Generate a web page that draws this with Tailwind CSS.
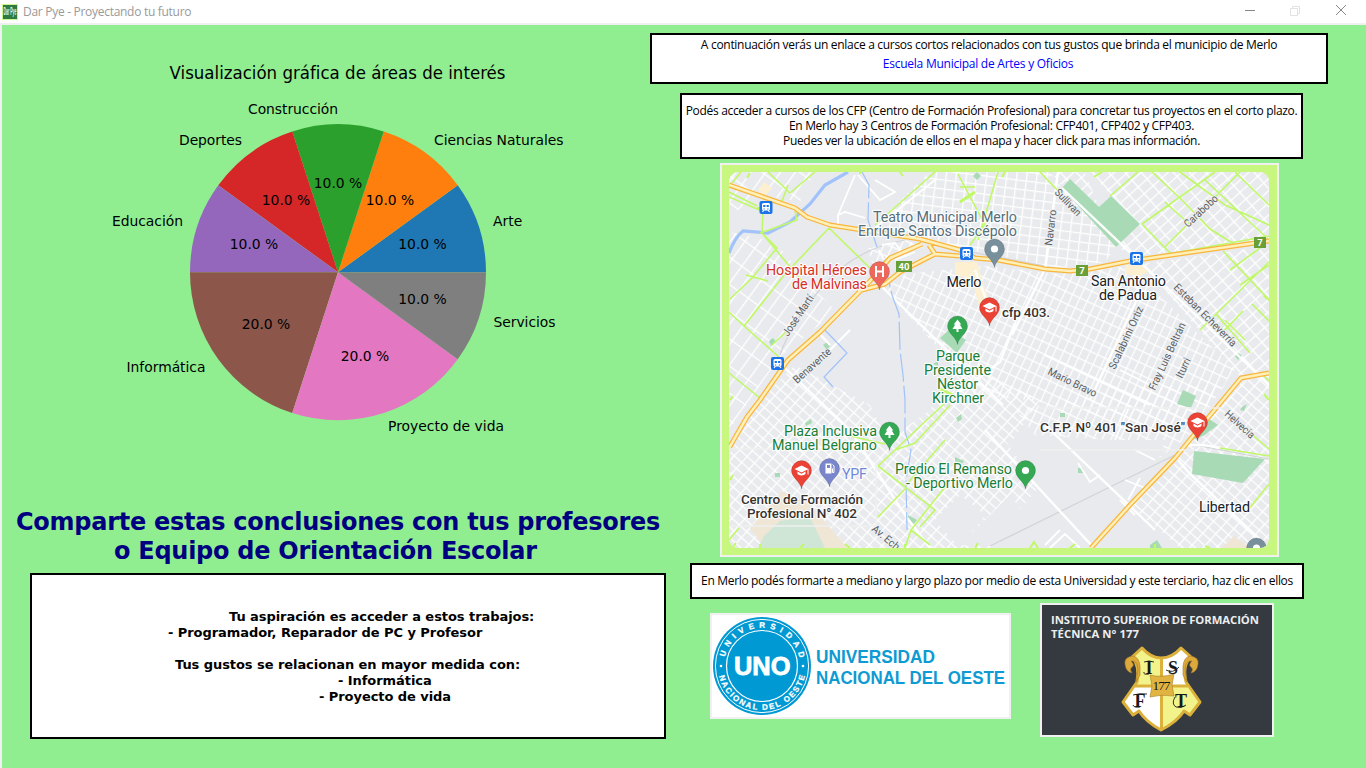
<!DOCTYPE html>
<html lang="es">
<head>
<meta charset="utf-8">
<title>Dar Pye - Proyectando tu futuro</title>
<script src="https://cdn.jsdelivr.net/npm/@tailwindcss/browser@4"></script>
</head>
<body class="flex h-[768px] w-[1366px] flex-col overflow-hidden bg-[#f0f0f0] text-black">
<header class="flex h-[23px] shrink-0 items-center bg-white pl-0.5">
  <svg class="size-4 shrink-0" viewBox="0 0 16 16"><rect width="16" height="16" fill="#c8f58c"/><rect x="1" y="1" width="14" height="14" fill="#2f7a41"/><text x="1.500" y="11" font-family="Liberation Sans" font-weight="700" font-size="10" fill="#e8f5e4" textLength="13" lengthAdjust="spacingAndGlyphs">Dar Pye</text></svg>
  <h1 class="ml-[5px] font-['Open_Sans',sans-serif] text-[12px] leading-4 tracking-[-0.29px] whitespace-nowrap text-[#999]">Dar Pye - Proyectando tu futuro</h1>
  <svg class="mr-[19px] ml-auto h-3 w-[102px] -translate-y-0.5" viewBox="0 0 102 12" fill="none" stroke-width="1"><path d="M0 6.500h10" stroke="#888"/><path d="M45.500 4.500h7v7h-7zM47.500 4.500v-2h7v7h-2" stroke="#e2e2e2"/><path d="M91 1l10 10M101 1L91 11" stroke="#888"/></svg>
</header>
<main class="mt-0.5 ml-0.5 flex min-h-0 flex-1 bg-[#90ee90]">
  <section class="flex w-[648px] shrink-0 flex-col">
    <svg class="h-[475px] w-[648px] shrink-0" viewBox="2 25 648 475" font-family="'DejaVu Sans',sans-serif" font-size="13.9">
      <text x="337.500" y="79" font-size="17" text-anchor="middle" textLength="336" lengthAdjust="spacingAndGlyphs">Visualización gráfica de áreas de interés</text>
      <g id="slices"></g>
      <text x="493" y="226">Arte</text>
      <text x="434" y="145">Ciencias Naturales</text>
      <text x="338" y="114" text-anchor="end" textLength="90">Construcción</text>
      <text x="242" y="145" text-anchor="end" textLength="63">Deportes</text>
      <text x="183" y="226" text-anchor="end" textLength="71">Educación</text>
      <text x="205.500" y="372" text-anchor="end" textLength="79">Informática</text>
      <text x="388" y="431">Proyecto de vida</text>
      <text x="493.500" y="327" textLength="62">Servicios</text>
      <g text-anchor="middle">
        <text x="422.500" y="249">10.0 %</text><text x="390" y="205">10.0 %</text><text x="338" y="188">10.0 %</text><text x="286" y="205">10.0 %</text><text x="254" y="249">10.0 %</text><text x="266" y="329">20.0 %</text><text x="365" y="361">20.0 %</text><text x="422.500" y="304">10.0 %</text>
      </g>
    </svg>
    <h2 class="mt-[8px] pl-3.5 font-['DejaVu_Sans',sans-serif] text-[24px] leading-[29px] font-bold tracking-[-0.27px] whitespace-pre text-[#000080]"><span class="block">Comparte estas conclusiones con tus profesores</span><span class="block pl-[98px]">o Equipo de Orientación Escolar</span></h2>
    <div class="mt-[7px] ml-7 h-[166px] w-[636px] shrink-0 border-2 border-black bg-white pt-[34px] font-['DejaVu_Sans',sans-serif] text-[13px] leading-4 font-bold tracking-[-0.06px] whitespace-nowrap">
      <p class="pl-[197px]">Tu aspiración es acceder a estos trabajos:</p>
      <p class="pl-[136px]">- Programador, Reparador de PC y Profesor</p>
      <p class="mt-4 pl-[143px]">Tus gustos se relacionan en mayor medida con:</p>
      <p class="pl-[306px]">- Informática</p>
      <p class="pl-[287px]">- Proyecto de vida</p>
    </div>
  </section>
  <section class="flex flex-1 flex-col items-start pt-2 text-center font-['Open_Sans',sans-serif] text-[12px] leading-[15px] whitespace-nowrap">
    <div class="h-[51px] w-[678px] shrink-0 border-2 border-black bg-white pt-0.5 tracking-[-0.3px]">
      <p>A continuación verás un enlace a cursos cortos relacionados con tus gustos que brinda el municipio de Merlo</p>
      <p class="mt-[4px] pr-[22px] tracking-[-0.25px] text-[#0000ff]">Escuela Municipal de Artes y Oficios</p>
    </div>
    <div class="mt-[9px] ml-[30px] h-[66px] w-[623px] shrink-0 border-2 border-black bg-white pt-[8px] tracking-[-0.32px]">
      <p>Podés acceder a cursos de los CFP (Centro de Formación Profesional) para concretar tus proyectos en el corto plazo.</p>
      <p>En Merlo hay 3 Centros de Formación Profesional: CFP401, CFP402 y CFP403.</p>
      <p>Puedes ver la ubicación de ellos en el mapa y hacer click para mas información.</p>
    </div>
    <svg class="mt-1 ml-[70px] h-[394px] w-[559px] shrink-0" viewBox="720 163 559 394" font-family="Roboto,sans-serif">
      <defs>
        <clipPath id="mapclip"><rect x="729" y="172" width="540" height="376" rx="9"/></clipPath>
        <pattern id="gTop" width="10" height="9" patternUnits="userSpaceOnUse" patternTransform="rotate(7)"><path d="M0 0H10M0 0V9" stroke="#fff" stroke-width="2.600"/></pattern>
        <pattern id="gNE" width="12" height="9" patternUnits="userSpaceOnUse" patternTransform="rotate(-42)"><path d="M0 0H12M0 0V9" stroke="#fff" stroke-width="2.600"/></pattern>
        <pattern id="gMid" width="8" height="11" patternUnits="userSpaceOnUse" patternTransform="rotate(25)"><path d="M0 0H8M0 0V11" stroke="#fff" stroke-width="2.400"/></pattern>
        <pattern id="gSW" width="8" height="10" patternUnits="userSpaceOnUse" patternTransform="rotate(-48)"><path d="M0 0H8M0 0V10" stroke="#fff" stroke-width="2.400"/></pattern>
        <pattern id="gW" width="22" height="12" patternUnits="userSpaceOnUse" patternTransform="rotate(-54)"><path d="M0 0H22M0 0V12" stroke="#fff" stroke-width="2.400"/></pattern>
        <g id="pin"><path d="M0 18.500C-1 11-10 7.500-10 0a10 10 0 1 1 20 0C10 7.500 1 11 0 18.500z" stroke="#000" stroke-opacity=".18" stroke-width=".8"/></g>
        <g id="cap" fill="#fff"><path d="M0-5L7-1.500 0 2-7-1.500z"/><path d="M-4 1L0 3.200 4 1v2.600C2.500 5.500-2.500 5.500-4 3.600zM6-1.500h1V4H6z"/></g>
        <g id="tree" fill="#fff"><path d="M0-6.500L3.800-1.500H2.300L5 3H1v3h-2V3h-4l2.700-4.500h-1.500z"/></g>
        <g id="train"><rect x="-6.500" y="-6.500" width="13" height="13" rx="2" fill="#1a73e8"/><rect x="-4" y="-4.500" width="8" height="7.500" rx="1.500" fill="#fff"/><path d="M-2 2.500L-3.500 4.500M2 2.500L3.500 4.500" stroke="#fff" stroke-width="1.200"/><path d="M-2.800-2.500h2.200v2h-2.200zM.6-2.500h2.200v2H.6zM-2.500 1h1.200v1h-1.200zM1.300 1h1.200v1H1.300z" fill="#1a73e8"/></g>
      </defs>
      <rect x="720" y="163" width="559" height="394" fill="#f0f0f0"/>
      <rect x="722" y="165" width="555" height="390" fill="#c8f77f"/>
      <g clip-path="url(#mapclip)">
        <rect x="729" y="172" width="540" height="376" fill="#e8eaed"/>
        <path d="M729 172H814L800 202 765 195 729 215zM729 232L760 238 782 250 812 287 836 311 780 357 729 430z" fill="url(#gW)"/>
        <path d="M930 172H1050L1062 188 1116 247 1105 262 1060 268 1000 256 935 243 895 232 880 220z" fill="url(#gTop)"/>
        <path d="M1050 172H1085L1099 207 1111 196 1090 172H1269V240L1136 256 1116 247z" fill="url(#gNE)"/>
        <path d="M1140 264L1269 246V375L1241 378 1160 285z" fill="url(#gNE)"/>
        <path d="M885 290L905 274 985 266 1060 274 1130 266 1235 370 1190 428 1135 425 1030 400 975 395 940 350z" fill="url(#gMid)"/>
        <path d="M868 248L905 240 925 247 890 257 875 275zM1150 385L1225 385 1190 435 1150 465 1110 440 1035 435 1015 410z" fill="url(#gMid)"/>
        <path d="M729 455L760 400 795 365 870 405 888 440 930 410 960 360 1040 400 1010 445 1040 485 990 548H729z" fill="url(#gSW)"/>
        <path d="M1240 382L1269 375V548H1180L1130 505 1165 475 1196 435z" fill="url(#gSW)"/>
        <path d="M1005 440L1165 440 1155 470 1130 495 1091 535 1040 490zM960 545L1010 495 1050 548zM935 520l25-25 25 20-25 33z" fill="#e8eaed"/>
        <g fill="#a8dab5"><path d="M1070 179L1062 188 1116 247 1140 224 1111 196 1099 207zM1194 451L1265 459 1243 483 1192 474zM1183 390L1196 396 1191 408 1177 404zM1208 418L1218 425 1203 436 1192 440zM940 338L950 329 966 340 957 353zM1242 407l5-3-3 7-4-1zM1078 468h5v5h-5zM1060 413h5v4h-5zM977 172l4 4-4 4-4-4zM769 341l4-3 3 4-5 4zM823 345l4-3 3 4-3 4zM805 423l6-4 1 4-6 3zM908 515l9 5-3 4-7-5zM955 457l9 4-3 4-6-2zM956 418l5-4 1 5-4 3zM1150 545l7-5 5 8h-12zM933 364l5-3v5zM775 473h5v4h-5zM1238 353l4 2-4 5-3-4z"/></g>
        <path d="M750 528L782 491 810 505 848 548H765z" fill="#efe6d6"/><path d="M764 536L780 521 810 517 825 548H758z" fill="#cfe6d7"/><path d="M1222 548l12-12 16 12z" fill="#efe6d6"/>
        <path d="M955 262h22l8 28 10 20-14 4-9-35-17-4zM1125 265l18-2 5 9-8 4-15-2zM764 182l8 6-8 9-6-7z" fill="#fdf0d0"/>
        <g fill="none" stroke="#d2d4d7" stroke-width="1.200"><path d="M780 355Q790 325 822 287T905 240M990 546L1175 455M1195 445L1269 459M795 211L825 224M960 250L1045 266"/></g>
        <g fill="none" stroke="#fff" stroke-width="2.400"><path d="M878 283L1003 405M985 430L1094 548M1140 262L1269 385M1062 188L1140 262M1058 172L1045 269 1012 335M785 368L850 430 905 515 930 548M795 385L850 330M975 270L990 310M955 395L1000 362 1015 323M1045 355L1150 405M1178 460L1190 474 1269 548M1045 425L1155 530M818 332L830 345M1090 400L1140 293M1183 446Q1200 443 1220 448"/></g>
        <g fill="none" stroke="#fff" stroke-width="1.800"><path d="M855 175L838 215 845 212 865 218M838 215V226M858 175L880 200 895 192 875 180M875 228L935 180M882 245L895 243 906 257M879 250L887 267M895 260L915 252M1150 385L1120 370M1078 463L1090 482 1100 475M1135 450L1155 460M1125 480L1150 490M1050 548L1065 534 1080 548M1060 530L1045 545M1120 500L1135 515M1115 440L1130 405M1128 500L1140 478"/></g>
        <g fill="none" stroke="#a1c2fa"><path d="M729 253Q735 237 743 231L768 233 790 222 810 204 825 185 848 172" stroke-width="3.200"/><path d="M862 172L869 185 868 220 877 247M884 260L892 295 899 314 900 350 903 375 905 400 905 432 911 450 906 480 907 530" stroke-width="1.200" stroke-dasharray="28 4"/><path d="M823 328L847 353 824 377 833 387" stroke-width="1.200"/></g>
        <g fill="none" stroke="#c0f868" stroke-width="1.600"><path d="M763 212L762 233 777 248 752 278 730 299M762 233L805 285M829 228L785 274 744 326 779 357M829 228L873 271M729 312L744 326M741 172L732 183M768 172L790 193 815 172M788 185L782 201M729 192L757 206M729 197L757 209M795 211L797 220 760 233M746 275L768 281M729 373L760 398M772 345L788 330M935 172L875 225M958 174L985 225 970 245M998 172L978 240M960 187H975M1040 172L1062 195M1110 196L1138 172M1152 172L1180 198 1210 229 1234 244M1142 224L1215 172M1142 224L1170 253M1165 247L1240 172M1165 202L1187 222M1205 180L1269 240M1180 172L1225 205 1269 225M1235 172L1269 205M1135 260L1269 236M1223 251L1269 300M1269 262L1210 320 1200 330M1230 270L1260 248M1240 285L1269 265M1225 320L1245 340M1216 314L1250 353M1252 304L1269 321M1220 335L1243 311M1220 448L1269 456M1250 433L1269 449M1248 510L1269 484M1262 374L1269 381M878 466L935 510 920 527M878 466L948 400 938 391M895 450L915 443 950 405M878 517L906 488M906 485L945 440M905 548L911 530 945 487M911 530L930 545M729 540L739 528M850 436L885 444"/><path d="M757 208l5 2M940 389l13 6M975 192l-15 10" stroke-width="3"/></g>
        <path d="M732 548l4-5M760 548v-4M800 548l4-4M850 548l-5-4M905 544v4M975 548l3-5M1030 548l4-6 4 6M1070 548l5-4M1155 544v4M1205 546l5 2M750 173l-3 5M860 174v-2M900 172l3 4M1005 172l-3 5M1094 177l8-5M1269 300l-5-4M1269 400l-5-6M730 400l3-4M730 480l3-5" fill="none" stroke="#c0f868" stroke-width="2"/>
        <g fill="none" stroke-linejoin="round">
          <path stroke="#f9b63c" stroke-width="5" d="M729 185L795 208 807 217 830 225 920 239 960 250 975 258 998 260 1045 269 1070 271 1090 269 1130 261 1269 241M922 244L890 258 870 281 820 332 788 360 760 400 747 417 729 448M858 291L885 284 900 272 935 254 960 256M929 245L935 254M1091 548L1130 505 1175 458 1193 436 1241 378 1269 373"/>
          <path stroke="#ffefb8" stroke-width="2.500" d="M729 185L795 208 807 217 830 225 920 239 960 250 975 258 998 260 1045 269 1070 271 1090 269 1130 261 1269 241M922 244L890 258 870 281 820 332 788 360 760 400 747 417 729 448M858 291L885 284 900 272 935 254 960 256M929 245L935 254M1091 548L1130 505 1175 458 1193 436 1241 378 1269 373"/>
        </g>
        <path d="M729 449H876V526H729M1040 408H1222M1040 450H1195" fill="none" stroke="#efeff0" stroke-width="1.500"/>
        <use href="#train" x="766" y="207.500"/><use href="#train" x="966.500" y="253.500"/><use href="#train" x="777.500" y="363.500"/><use href="#train" x="1136.500" y="258.500"/>
        <g fill="#689f38"><rect x="896" y="261" width="16" height="11"/><rect x="1076" y="265" width="12" height="11"/><rect x="1254" y="237" width="12" height="11"/></g>
        <g fill="#fff" font-weight="700" font-size="9.500" text-anchor="middle"><text x="904" y="270">40</text><text x="1082" y="274">7</text><text x="1260" y="246">7</text></g>
        <g fill="#5a5e63" stroke="#eef0f2" stroke-width="2" paint-order="stroke" stroke-linejoin="round" font-size="10.800">
          <text transform="translate(1054 193) rotate(46)" textLength="33" lengthAdjust="spacingAndGlyphs">Sullivan</text>
          <text transform="translate(1052 246) rotate(-83)" textLength="36" lengthAdjust="spacingAndGlyphs">Navarro</text>
          <text transform="translate(1188 228) rotate(-43)" textLength="42" lengthAdjust="spacingAndGlyphs">Carabobo</text>
          <text transform="translate(788 337) rotate(-56)" textLength="47" lengthAdjust="spacingAndGlyphs">José Martí</text>
          <text transform="translate(797 384) rotate(-42)" textLength="47" lengthAdjust="spacingAndGlyphs">Benavente</text>
          <text transform="translate(1173 288) rotate(45)" textLength="84" lengthAdjust="spacingAndGlyphs">Esteban Echeverría</text>
          <text transform="translate(1115 370) rotate(-65)" textLength="68" lengthAdjust="spacingAndGlyphs">Scalabrini Ortiz</text>
          <text transform="translate(1155 391) rotate(-65)" textLength="73" lengthAdjust="spacingAndGlyphs">Fray Luis Beltrán</text>
          <text transform="translate(1182 379) rotate(-64)" textLength="21" lengthAdjust="spacingAndGlyphs">Iturri</text>
          <text transform="translate(1047 374) rotate(26)" textLength="53" lengthAdjust="spacingAndGlyphs">Mario Bravo</text>
          <text transform="translate(1224 415) rotate(42)" textLength="36" lengthAdjust="spacingAndGlyphs">Helvecia</text>
          <text transform="translate(871 530) rotate(40)" textLength="38" lengthAdjust="spacingAndGlyphs">Av. Eche</text>
        </g>
        <g stroke="#fff" stroke-opacity=".85" stroke-width="2.400" paint-order="stroke" stroke-linejoin="round" font-size="14.300">
          <g fill="#546e7a"><text x="873" y="221.500" textLength="144">Teatro Municipal Merlo</text><text x="858" y="235.500" textLength="159">Enrique Santos Discépolo</text></g>
          <g fill="#d93025"><text x="766" y="274.500" textLength="101">Hospital Héroes</text><text x="792" y="288.500" textLength="75">de Malvinas</text></g>
          <g fill="#202124"><text x="946.500" y="286.500" textLength="35">Merlo</text><text x="1091" y="285.500" textLength="75">San Antonio</text><text x="1099" y="299.500" textLength="58">de Padua</text><text x="1199" y="511.500" textLength="51">Libertad</text></g>
          <g fill="#188038"><text x="936" y="360.500" textLength="44">Parque</text><text x="924" y="374.500" textLength="67">Presidente</text><text x="937" y="388.500" textLength="41">Néstor</text><text x="932" y="402.500" textLength="52">Kirchner</text><text x="784" y="435.500" textLength="93">Plaza Inclusiva</text><text x="772" y="449.500" textLength="105">Manuel Belgrano</text><text x="895" y="473.500" textLength="117">Predio El Remanso</text><text x="906" y="487.500" textLength="107">- Deportivo Merlo</text></g>
          <text x="842" y="478.500" fill="#7087d8" textLength="25">YPF</text>
          <g fill="#37332f" font-weight="500" font-size="13.600"><text x="1002" y="317" textLength="48">cfp 403.</text><text x="1040" y="431.500" textLength="145">C.F.P. Nº 401 "San José"</text><text x="741" y="504" textLength="122">Centro de Formación</text><text x="747" y="518" textLength="110">Profesional N° 402</text></g>
        </g>
        <g transform="translate(989.500 307.500)"><use href="#pin" fill="#ea4335"/><use href="#cap"/></g>
        <g transform="translate(801.500 470.500)"><use href="#pin" fill="#ea4335"/><use href="#cap"/></g>
        <g transform="translate(1197.500 422.500)"><use href="#pin" fill="#ea4335"/><use href="#cap"/></g>
        <g transform="translate(957.500 326)"><use href="#pin" fill="#34a853"/><use href="#tree"/></g>
        <g transform="translate(889.500 432)"><use href="#pin" fill="#34a853"/><use href="#tree"/></g>
        <g transform="translate(994.500 249)"><use href="#pin" fill="#78909c"/><circle r="3.600" fill="#fff"/></g>
        <g transform="translate(1025.500 470.500)"><use href="#pin" fill="#34a853"/><circle r="3.600" fill="#fff"/></g>
        <g transform="translate(1256.500 548)"><use href="#pin" fill="#78909c"/><circle r="3.600" fill="#fff"/></g>
        <g transform="translate(879.500 271.500)"><use href="#pin" fill="#ee675c"/><path d="M-3.500-5.500v11M3.500-5.500v11M-3.500 0h7" stroke="#fff" stroke-width="2" fill="none"/></g>
        <g transform="translate(829.500 468.500)"><use href="#pin" fill="#7986cb"/><path d="M-4-5h6V5h-6z" fill="#fff"/><path d="M-2.500-3.500h3v3h-3z" fill="#7986cb"/><path d="M3-4l1.500 1.500V4H3V0" stroke="#fff" fill="none"/></g>
      </g>
    </svg>
    <div class="mt-1.5 ml-10 h-9 w-[614px] shrink-0 border-2 border-black bg-white pt-[8px] tracking-[-0.33px]">En Merlo podés formarte a mediano y largo plazo por medio de esta Universidad y este terciario, haz clic en ellos</div>
    <div class="mt-1 ml-[60px] flex items-start gap-[29px]">
      <svg class="mt-2.5 h-[106px] w-[301px]" viewBox="710 613 301 106" font-family="'Liberation Sans',sans-serif" font-weight="700">
        <path d="M710 613h301v106H710z" fill="#f0f0f0"/><path d="M712 615h297v102H712z" fill="#fff"/>
        <g transform="translate(762 666)">
          <circle r="49" fill="#0099d3"/><circle r="46.600" fill="none" stroke="#fff"/><circle r="35.500" fill="none" stroke="#fff" stroke-width="1.200"/>
          <path id="arcTop" d="M-38.300 0A38.300 38.300 0 0 1 38.300 0" fill="none"/><path id="arcBot" d="M-44 0A44 44 0 0 0 44 0" fill="none"/>
          <g fill="#fff" stroke="#fff" stroke-width=".25" font-size="8"><text><textPath href="#arcTop" startOffset="9" textLength="103">UNIVERSIDAD</textPath></text><text><textPath href="#arcBot" startOffset="10" textLength="118">NACIONAL DEL OESTE</textPath></text></g>
          <circle cx="-41" cy="0" r="1.300" fill="#fff"/><circle cx="41" cy="0" r="1.300" fill="#fff"/>
          <text x="-28" y="8.500" fill="#fff" stroke="#fff" stroke-width=".8" font-size="25.500" textLength="56.500" lengthAdjust="spacingAndGlyphs">UNO</text>
        </g>
        <g fill="#0e9ad2" font-size="19"><text x="816" y="662.500" textLength="119" lengthAdjust="spacingAndGlyphs">UNIVERSIDAD</text><text x="816" y="683.500" textLength="189" lengthAdjust="spacingAndGlyphs">NACIONAL DEL OESTE</text></g>
      </svg>
      <svg class="h-[134px] w-[234px]" viewBox="1040 603 234 134">
        <path d="M1040 603h234v134h-234z" fill="#f0f0f0"/><path d="M1042 605h230v130h-230z" fill="#343a40"/>
        <g fill="#eee" font-family="'Open Sans',sans-serif" font-weight="700" font-size="11.300"><text x="1051" y="624" textLength="208">INSTITUTO SUPERIOR DE FORMACIÓN</text><text x="1051" y="638" textLength="88">TÉCNICA N° 177</text></g>
        <clipPath id="shield"><path d="M1161 658Q1151 658 1142 648L1132 657Q1140 665 1137 682L1123 702 1133 715 1139 711Q1146 722 1161 730 1177 722 1184 711L1190 715 1200 702 1186 682Q1182 665 1191 657L1181 648Q1172 658 1161 658z"/></clipPath>
        <g clip-path="url(#shield)"><path d="M1120 640h41v46h-41zM1161 686h42v48h-42z" fill="#f3f38b"/><path d="M1161 640h42v46h-42zM1120 686h41v48h-41z" fill="#fff"/></g>
        <path d="M1161 658Q1151 658 1142 648L1132 657Q1140 665 1137 682L1123 702 1133 715 1139 711Q1146 722 1161 730 1177 722 1184 711L1190 715 1200 702 1186 682Q1182 665 1191 657L1181 648Q1172 658 1161 658zM1161.500 657V729M1135 686H1188" fill="none" stroke="#dbb13b" stroke-width="3" stroke-linejoin="round"/>
        <g fill="#dca93a" stroke="#a87c24" stroke-width=".6"><path d="M1133 656Q1124 657 1125 664 1126 672 1132 673 1129 669 1132 667 1135 665 1131 661 1137 660 1138 669L1136 682 1140 675 1140 666Q1139 657 1133 656zM1190 656Q1199 657 1198 664 1197 672 1191 673 1194 669 1191 667 1188 665 1192 661 1186 660 1185 669L1187 682 1183 675 1183 666Q1184 657 1190 656z"/><path d="M1150 675Q1161 678 1174 674L1172 685 1174 696Q1161 694 1150 697L1152 686z" fill="#e1b442"/></g>
        <g fill="#181818" font-family="'Liberation Serif',serif" text-anchor="middle"><text x="1161.500" y="690" font-size="13.500" textLength="18">177</text><g font-size="18" font-weight="700"><text x="1149" y="674">I</text><text x="1173" y="674">S</text><text x="1140" y="707">F</text><text x="1181" y="707">T</text></g></g>
        <path d="M1144 662q5-2 10 0M1144 672q-1 3 5 2M1166 670q7 4 13-3M1133 695q7-2 14-1M1133 705q1 3 7 2M1175 697q-4 7 1 10 5 2 10-2" fill="none" stroke="#181818" stroke-width=".9"/>
      </svg>
    </div>
  </section>
</main>
<script>
const data = [[10,'#1f77b4'],[10,'#ff7f0e'],[10,'#2ca02c'],[10,'#d62728'],[10,'#9467bd'],[20,'#8c564b'],[20,'#e377c2'],[10,'#7f7f7f']];
let turn = 0;
const point = t => `${338 + 148 * Math.cos(2 * Math.PI * t)} ${272.3 - 148 * Math.sin(2 * Math.PI * t)}`;
document.getElementById('slices').innerHTML = data.map(([share, color]) => {
  const start = turn;
  turn += share / 100;
  return `<path d="M338 272.300L${point(start)}A148 148 0 0 0 ${point(turn)}Z" fill="${color}"/>`;
}).join('');
</script>
</body>
</html>
